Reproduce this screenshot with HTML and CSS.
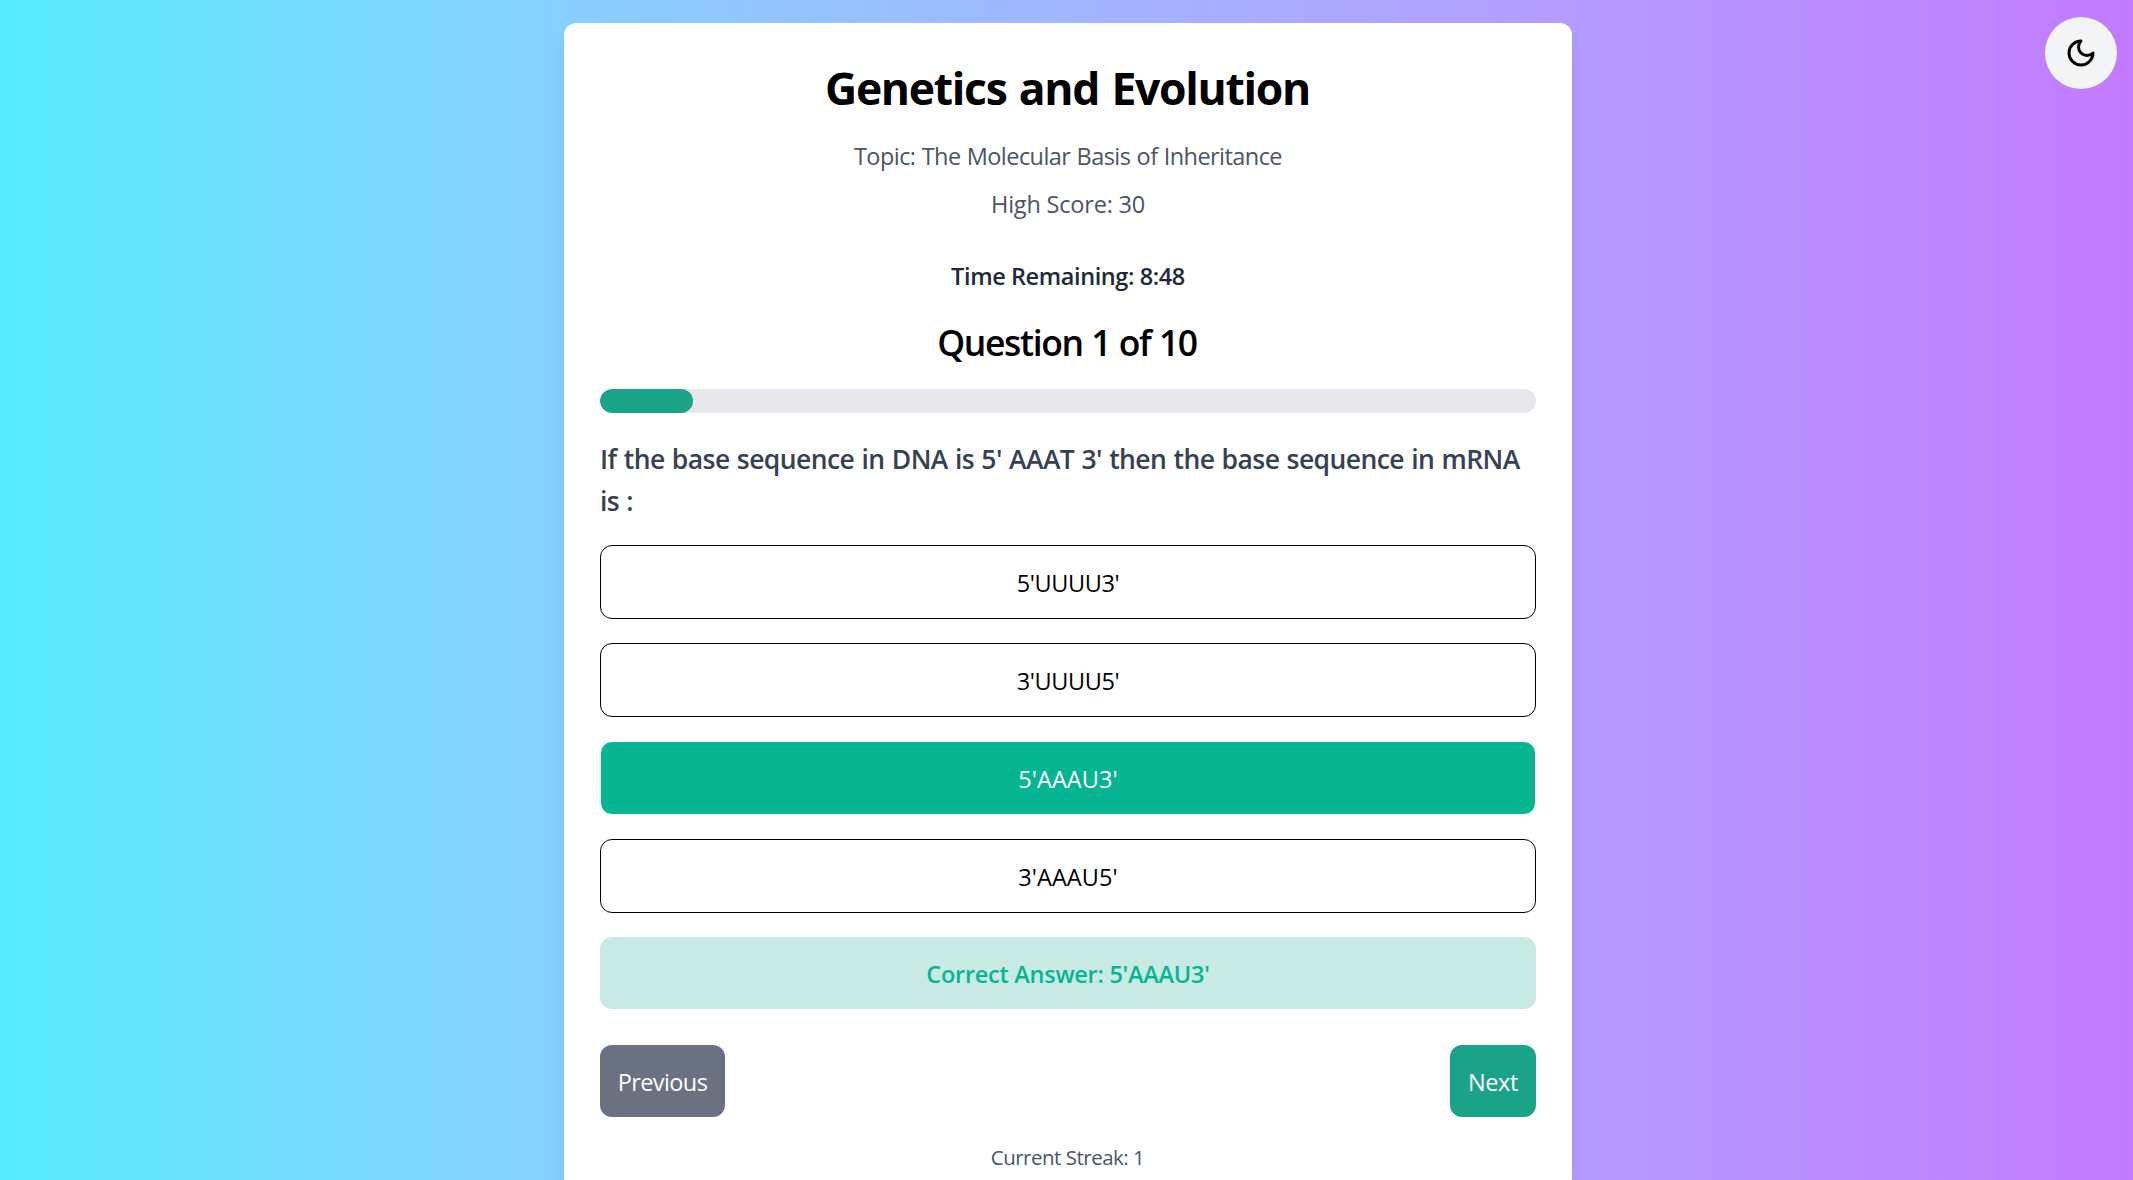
FILE: index.html
```html
<!DOCTYPE html>
<html lang="en">
<head>
<meta charset="utf-8">
<title>Genetics and Evolution</title>
<link rel="stylesheet" href="styles.css">
</head>
<body>
<button class="theme-toggle" aria-label="Dark mode">
  <svg class="moon" viewBox="0 0 24 24"><path d="M12 3a6 6 0 0 0 9 9 9 9 0 1 1-9-9Z"/></svg>
</button>
<main class="card">
  <h1 class="title">Genetics and Evolution</h1>
  <p class="meta topic">Topic: The Molecular Basis of Inheritance</p>
  <p class="meta score">High Score: 30</p>
  <p class="timer">Time Remaining: 8:48</p>
  <h2 class="counter">Question 1 of 10</h2>
  <div class="progress"><div class="progress-fill" style="width: 9.93%"></div></div>
  <p class="question">If the base sequence in DNA is 5' AAAT 3' then the base sequence in mRNA is :</p>
  <div class="options">
    <button class="option tight">5'UUUU3'</button>
    <button class="option tight">3'UUUU5'</button>
    <button class="option correct">5'AAAU3'</button>
    <button class="option">3'AAAU5'</button>
  </div>
  <p class="answer">Correct Answer: 5'AAAU3'</p>
  <nav class="nav">
    <button class="btn previous">Previous</button>
    <button class="btn next">Next</button>
  </nav>
  <p class="streak">Current Streak: 1</p>
</main>
</body>
</html>
```
FILE: styles.css
```css
* { box-sizing: border-box; margin: 0; padding: 0; }
html, body { height: 100%; overflow: hidden; }
body {
  padding-top: 23px;
  font-family: "Open Sans", "Noto Sans", sans-serif;
  font-size: 23.5px;
  line-height: 36px;
  color: #000;
  background: linear-gradient(to right in oklab, #53eafd, #c27aff);
}
button { font: inherit; border: 0; color: inherit; }
.theme-toggle {
  position: absolute; top: 17px; right: 16px;
  width: 72px; height: 72px; border-radius: 50%;
  background: #f3f4f6;
  display: flex; align-items: center; justify-content: center;
}
.moon { width: 32px; height: 32px; fill: none; stroke: #000; stroke-width: 2.2; stroke-linecap: round; stroke-linejoin: round; }
.card {
  width: 1008px; height: 100%;
  margin: 0 0 0 564px;
  padding: 36px 36px 0;
  background: #fff;
  border-radius: 12px 12px 0 0;
  box-shadow: 0 15px 22.5px -4.5px rgba(0,0,0,.1), 0 6px 9px -6px rgba(0,0,0,.1);
  text-align: center;
}
.title { margin-top: -1px; font-size: 44.5px; line-height: 60px; font-weight: 700; letter-spacing: -1.3px; word-spacing: 2px; text-indent: -1px; }
.meta { color: #4a5565; }
.topic { margin-top: 20px; letter-spacing: -.55px; word-spacing: .6px; }
.score { margin-top: 12px; letter-spacing: -.2px; }
.timer { margin-top: 36px; font-weight: 600; color: #1e2939; letter-spacing: -.4px; }
.counter { margin-top: 24px; font-size: 35.5px; line-height: 48px; font-weight: 600; letter-spacing: -1.35px; word-spacing: .6px; text-indent: -2px; }
.progress { margin-top: 23px; height: 24px; border-radius: 12px; background: #e5e7eb; overflow: hidden; }
.progress-fill { height: 100%; border-radius: 12px; background: #1ba38a; }
.question { margin-top: 25px; font-size: 26.5px; line-height: 42px; font-weight: 600; color: #364153; text-align: left; letter-spacing: -.57px; word-spacing: .9px; }
.options { margin-top: 23px; display: flex; flex-direction: column; gap: 24px; }
.option { height: 74px; padding-top: 2px; border: 1px solid #000; border-radius: 12px; background: #fff; letter-spacing: .1px; }
.option.tight { letter-spacing: -.4px; }
.option.correct { color: #fff; background: #06b592; border-color: #fff; }
.answer { margin-top: 24px; height: 72px; line-height: 74px; border-radius: 12px; background: #c7ebe4; color: #06b592; font-weight: 600; letter-spacing: -.27px; }
.nav { margin-top: 36px; display: flex; justify-content: space-between; }
.btn { height: 72px; padding-top: 2px; border-radius: 12px; color: #fff; }
.previous { width: 125px; background: #6a7282; letter-spacing: -.6px; }
.next { width: 86px; background: #1ba38a; letter-spacing: -.4px; }
.streak { margin-top: 22px; font-size: 20.5px; color: #4a5565; letter-spacing: -.5px; text-indent: -1px; }
```
